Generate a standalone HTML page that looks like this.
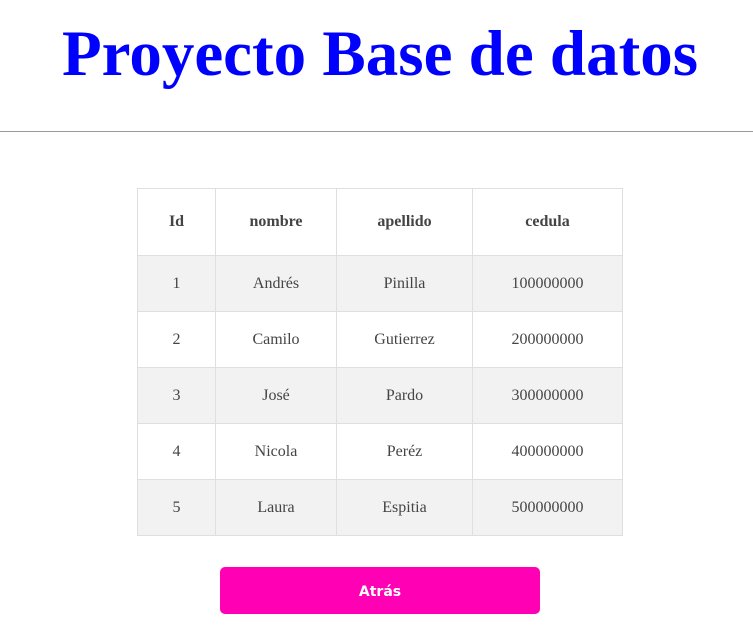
<!DOCTYPE html>
<html><head><meta charset="utf-8"><style>
body{margin:0;width:753px;height:627px;background:#fff;font-family:"Liberation Serif",serif;overflow:hidden;position:relative}
h1{position:absolute;top:16px;left:0;width:760px;margin:0;text-align:center;color:#0000ff;font-size:65px;font-weight:bold;line-height:76px}
.hr{position:absolute;top:131px;left:0;width:753px;height:1px;background:#9a9a9a}
table{position:absolute;left:137px;top:188px;border-collapse:collapse;color:#444;font-size:16px}
td,th{border:1px solid #dfdfe3;text-align:center;padding:0}
th{height:66px;font-weight:bold}
td{height:55px}
tr.g td{background:#f2f2f2}
.btn{position:absolute;left:220px;top:567px;width:320px;height:47px;background:#ff00b4;border-radius:5px;color:#fff;font-family:"DejaVu Sans","Liberation Sans",sans-serif;font-weight:bold;font-size:14px;text-align:center;line-height:51px}
</style></head><body>
<h1>Proyecto Base de datos</h1>
<div class="hr"></div>
<table>
<tr><th style="width:77px">Id</th><th style="width:120px">nombre</th><th style="width:135px">apellido</th><th style="width:149px">cedula</th></tr>
<tr class="g"><td>1</td><td>Andrés</td><td>Pinilla</td><td>100000000</td></tr>
<tr><td>2</td><td>Camilo</td><td>Gutierrez</td><td>200000000</td></tr>
<tr class="g"><td>3</td><td>José</td><td>Pardo</td><td>300000000</td></tr>
<tr><td>4</td><td>Nicola</td><td>Peréz</td><td>400000000</td></tr>
<tr class="g"><td>5</td><td>Laura</td><td>Espitia</td><td>500000000</td></tr>
</table>
<div class="btn">Atrás</div>
</body></html>
